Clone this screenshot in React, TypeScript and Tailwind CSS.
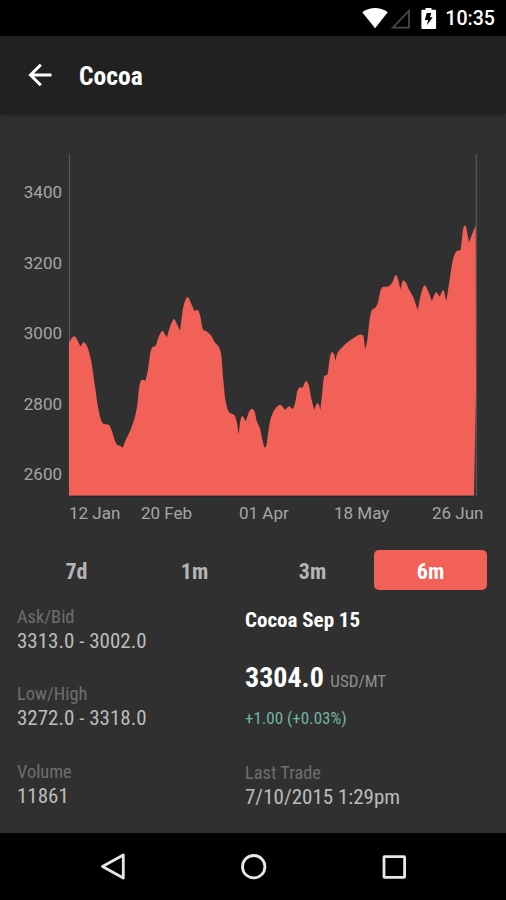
import React from 'react'

type Point = [number, number]

const prices: Point[] = [
  [69, 343], [74, 336.3], [80.7, 346.5], [83.5, 342.3], [86.7, 345.5], [91, 360], [95, 386.5],
  [98.3, 408.5], [101.7, 421.5], [104, 424], [108.7, 424.7], [111.7, 430.5], [115.3, 441.5],
  [117.3, 445], [120, 445.7], [122.8, 447.7], [125.7, 440], [130, 431], [135, 416.5],
  [137.3, 405], [139.3, 386.5], [141.5, 380], [143.5, 379.8], [145.3, 381.3], [147.7, 371.5],
  [151, 350], [153, 346.7], [155, 346.5], [159, 336], [162.3, 331], [166.7, 337.5], [171, 324],
  [174, 319], [176.7, 323.5], [180, 330.7], [184, 304], [187.7, 297], [190.7, 302.5],
  [194.3, 311], [197.7, 310], [200, 315], [203, 329.5], [206.7, 331.5], [211, 335.5],
  [215, 342.5], [218.3, 346], [221, 353.5], [223.3, 380], [225.7, 401.5], [229.3, 412.5],
  [234.3, 415], [236.7, 421.5], [238.7, 434.8], [240.5, 420], [242.3, 416], [245.7, 421.5],
  [249.3, 411.5], [252, 408.7], [254.7, 411.7], [256.7, 421], [260, 428.5], [262.3, 439.5],
  [264.3, 447.5], [266, 446.5], [268.3, 431.7], [270.7, 418.5], [275, 409], [280, 404.7],
  [285.3, 410], [289, 406.3], [292.7, 409.3], [295, 403.5], [297.7, 390], [300, 387.3],
  [302.7, 387.7], [306, 381], [308.7, 385], [311.3, 398.5], [314.3, 410], [317.3, 403.3],
  [319, 405], [320.3, 410], [322, 395], [324.3, 375.9], [327.3, 374.7], [330, 356.7],
  [332, 352], [334, 354], [335.5, 361], [337, 354], [341, 348.5], [348.3, 341.7],
  [355, 337], [360.7, 334.5], [363.3, 335.3], [365.1, 349.5], [367.3, 340], [370, 316.7],
  [372.3, 309.3], [374.7, 308.3], [377.7, 303.3], [380.7, 290], [382.7, 287], [388.3, 286.5],
  [391.7, 283.3], [396, 275], [398.3, 280], [400.3, 289.5], [403.3, 280.3], [405.7, 282.3],
  [408.7, 289], [413.3, 297.3], [417.8, 310.3], [421, 294], [424.7, 285.3], [427.3, 289.3],
  [431.9, 301.3], [436.3, 292.3], [439.7, 296.7], [443.3, 290], [446.3, 301], [449, 284],
  [453.3, 258.3], [456.7, 251], [460.3, 250.3], [463.3, 228.3], [465.3, 225.3],
  [467.3, 233.3], [469, 242.7], [471.7, 235], [475.7, 225.7],
]

const periods = ['7d', '1m', '3m', '6m']
const condensed = "font-['Roboto_Condensed',Roboto,sans-serif] [font-stretch:75%]"

// rounded peaks, sharp dips
function linePath(points: Point[]) {
  const slope = (i: number) =>
    (points[i + 1][1] - points[i][1]) / (points[i + 1][0] - points[i][0])
  const last = points.length - 1

  let d = `M${points[0][0]} ${points[0][1]}`
  for (let i = 0; i < last; i++) {
    const [x0, y0] = points[i]
    const [x1, y1] = points[i + 1]
    const s = slope(i)
    const tangent = (other: number) => {
      if (other * s > 0) return (2 * other * s) / (other + s)
      return 0
    }
    const before = i > 0 ? slope(i - 1) : s
    const after = i + 1 < last ? slope(i + 1) : s
    const t0 = before > 0 && s < 0 ? s : tangent(before)
    const t1 = s > 0 && after < 0 ? s : tangent(after)
    const h = (x1 - x0) / 3
    d += `C${x0 + h} ${y0 + t0 * h} ${x1 - h} ${y1 - t1 * h} ${x1} ${y1}`
  }
  return d
}

function StatusBar() {
  return (
    <div className="flex h-9 items-center justify-end bg-black pr-[11px] pt-0.5">
      <svg className="h-9 w-20" viewBox="359.3 0.6 80 36">
        <path d="M362.5 11.8Q375.5 3.6 388 11.8L375.4 27.8Z" fill="#fff" />
        <path d="M409.3 10.3V27.2H393.2Z" fill="none" stroke="#484848" strokeWidth="1.8" />
        <path d="M425.8 7.7h6v1.6h3.6q1 0 1 1v17.2q0 1-1 1h-12.7q-1 0-1-1V10.3q0-1 1-1h3.1z" fill="#fff" />
        <path d="M427 12.7h4.6l-1.3 4.2h2.7l-5.8 8 1.2-5.4h-3.2z" fill="#000" />
      </svg>
      <span className="ml-1.5 text-[19.6px] font-medium leading-9 text-white">10:35</span>
    </div>
  )
}

function AppBar() {
  return (
    <div className="z-10 flex h-[78px] items-center bg-[#212121] pl-7 shadow-[0_2px_5px_rgba(0,0,0,0.25)]">
      <svg className="h-6 w-6" viewBox="0 0 24 24" fill="none" stroke="#fff" strokeWidth="3">
        <path d="M23.5 12H3M12.8 1.7 2.5 12l10.3 10.3" />
      </svg>
      <h1 className={`${condensed} ml-[27px] mt-0.5 text-[25.5px] font-bold leading-8 text-white`}>Cocoa</h1>
    </div>
  )
}

function Chart() {
  return (
    <div className="pt-10">
      <div className="flex text-[17px] text-[#a6a6a6]">
        <div className="flex w-[62px] flex-col gap-[50.6px] pt-7 text-right leading-5">
          <span>3400</span>
          <span>3200</span>
          <span>3000</span>
          <span>2800</span>
          <span>2600</span>
        </div>
        <svg className="ml-1.5 h-[343px] w-[410px]" viewBox="68 154 410 343">
          <path d="M69.5 154V496" stroke="#585858" strokeWidth="1.2" />
          <path d="M476.3 154V496" stroke="#585858" strokeWidth="1.2" />
          <path d={`${linePath(prices)}L476 390L474 495.7H69Z`} fill="#f16158" />
          <path d="M69 496.3H476" stroke="#1f2a27" />
        </svg>
      </div>
      <div className="flex pl-[69px] pt-1.5 text-[17px] leading-5 text-[#a6a6a6]">
        <span className="w-[72px]">12 Jan</span>
        <span className="w-[98px]">20 Feb</span>
        <span className="w-[95px]">01 Apr</span>
        <span className="w-[98px]">18 May</span>
        <span>26 Jun</span>
      </div>
    </div>
  )
}

function Stat({ label, value }: { label: string; value: string }) {
  return (
    <div>
      <p className="text-[18.4px] leading-6 text-[#6e6e6e]">{label}</p>
      <p className="text-[21px] leading-[25px] text-[#bcbcbc]">{value}</p>
    </div>
  )
}

export default function App() {
  return (
    <div className="flex h-[900px] w-[506px] flex-col overflow-hidden bg-[#303030] font-[Roboto,sans-serif]">
      <StatusBar />
      <AppBar />
      <Chart />

      <div className={`${condensed} mt-[27px] flex gap-[5px] pl-5 text-[22px] font-bold text-[#b5b5b5]`}>
        {periods.map((period) => (
          <button
            key={period}
            className={`h-10 w-[113px] rounded-[5px] pt-0.5 ${period === '6m' ? 'bg-[#f16158] text-white' : ''}`}
          >
            {period}
          </button>
        ))}
      </div>

      <div className={`${condensed} flex flex-1 pl-[17px] pt-3.5`}>
        <div className="flex w-[228px] flex-col gap-[28.4px] pt-px">
          <Stat label="Ask/Bid" value="3313.0 - 3002.0" />
          <Stat label="Low/High" value="3272.0 - 3318.0" />
          <Stat label="Volume" value="11861" />
        </div>
        <div>
          <h2 className="pt-0.5 text-[21px] font-bold leading-7 text-white">Cocoa Sep 15</h2>
          <p className="mt-7 text-[28px] font-bold leading-8 text-white">
            3304.0 <span className="text-[17px] font-normal text-[#8f8f8f]">USD/MT</span>
          </p>
          <p className="mb-[31px] mt-[9px] text-[17px] leading-6 text-[#6fb5a4]">+1.00 (+0.03%)</p>
          <Stat label="Last Trade" value="7/10/2015 1:29pm" />
        </div>
      </div>

      <div className="flex h-[67px] justify-center bg-black">
        <svg className="h-[67px] w-[350px]" viewBox="78 833 350 67" fill="none" stroke="#e8e8e8" strokeWidth="2.8">
          <path d="M123.3 855V878L102.5 866.5Z" strokeLinejoin="round" />
          <circle cx="253.7" cy="866.7" r="11.2" />
          <rect x="384" y="856.7" width="20.6" height="20.6" rx="0.5" />
        </svg>
      </div>
    </div>
  )
}
